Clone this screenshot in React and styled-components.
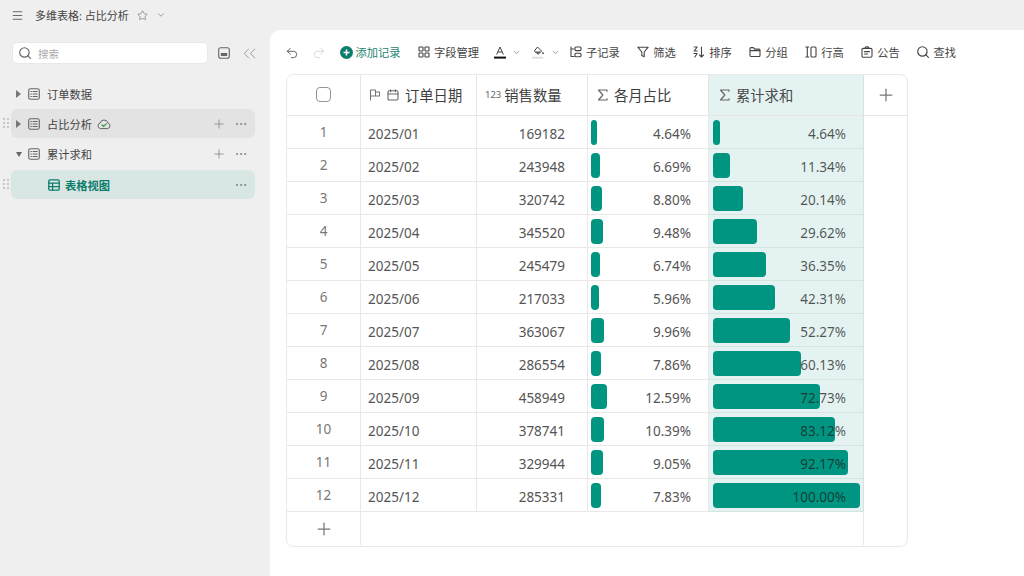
import React from "react";
import styled, { createGlobalStyle } from "styled-components";
import {
  ChevronDown,
  ChevronsLeft,
  Ellipsis,
  Menu,
  Plus,
  Redo2,
  Star,
  Undo2,
} from "lucide-react";

const TEAL = "#009580";

const GlobalStyle = createGlobalStyle`
  html, body {
    margin: 0;
    padding: 0;
    background: #efefef;
  }
  body {
    font-family: "Noto Sans", "Noto Sans CJK SC", sans-serif;
    color: #333;
  }
  * {
    box-sizing: border-box;
  }
  svg {
    flex: none;
  }
`;

const Page = styled.div`
  width: 1024px;
  height: 576px;
  display: flex;
  flex-direction: column;
  overflow: hidden;
  background: #efefef;
`;

const TopBar = styled.header`
  height: 30px;
  display: flex;
  align-items: center;
  padding-left: 11px;
  color: #666;
`;

const DocTitle = styled.span`
  margin-left: 11px;
  margin-right: 8px;
  font-size: 11px;
  color: #444;
`;

const Body = styled.div`
  flex: 1;
  display: flex;
  min-height: 0;
`;

const Sidebar = styled.aside`
  width: 270px;
  flex: none;
  padding: 12px 15px 0 11px;
`;

const SearchRow = styled.div`
  display: flex;
  align-items: center;
  height: 22px;
  margin-bottom: 15px;
  color: #666;
`;

const SearchBox = styled.div`
  width: 196px;
  height: 22px;
  flex: none;
  display: flex;
  align-items: center;
  gap: 7px;
  padding-left: 6px;
  margin-left: 1px;
  margin-right: 10px;
  background: #fff;
  border: 1px solid #e8e8e8;
  border-radius: 5px;
  font-size: 10.5px;
  color: #aaa;
`;

const Collapse = styled.span`
  display: flex;
  flex: none;
  margin-left: 9px;
  color: #777;
`;

const NavList = styled.nav`
  display: flex;
  flex-direction: column;
  gap: 1.4px;
`;

const NavItem = styled.div`
  position: relative;
  height: 29px;
  display: flex;
  align-items: center;
  padding: 0 7px 0 ${(p) => (p.$child ? "37px" : "4px")};
  border-radius: 6px;
  background: ${(p) => p.$bg || "transparent"};
  font-size: 11.25px;
  font-weight: ${(p) => (p.$child ? 700 : 400)};
  color: ${(p) => (p.$child ? "#0c7d6c" : "#444")};
`;

const Caret = styled.span`
  width: 0;
  height: 0;
  margin: 0 ${(p) => (p.$open ? "6px" : "7px")} 0 1px;
  border-style: solid;
  border-color: transparent;
  ${(p) =>
    p.$open
      ? "border-width: 5px 3px 0 3px; border-top-color: #666;"
      : "border-width: 4px 0 4px 5px; border-left-color: #777;"}
`;

const NavLabel = styled.span`
  margin-left: ${(p) => (p.$child ? "5px" : "7px")};
`;

const Grip = styled.span`
  position: absolute;
  left: -8px;
  top: 9px;
  display: flex;
`;

const NavActions = styled.span`
  margin-left: auto;
  display: flex;
  align-items: center;
  gap: 8px;
  color: #777;
`;

const Main = styled.main`
  flex: 1;
  min-width: 0;
  padding: 0 116px 0 16px;
  background: #fff;
  border-top-left-radius: 10px;
`;

const Toolbar = styled.div`
  height: 44px;
  display: flex;
  align-items: center;
  gap: 17.5px;
  color: #555;
`;

const HistoryGroup = styled.div`
  display: flex;
  gap: 13px;
  margin-right: -4px;
  margin-left: -1px;
  padding-top: 1px;
`;

const ToolButton = styled.button`
  display: flex;
  align-items: center;
  gap: ${(p) => (p.$tight ? "3px" : "4px")};
  padding: 0;
  border: 0;
  background: none;
  font: inherit;
  font-size: 11.25px;
  white-space: nowrap;
  color: ${(p) => (p.$accent ? "#1c8572" : "#444")};
`;

const ColorGroup = styled.div`
  display: flex;
  align-items: center;
  gap: 11px;
  margin-left: -3px;
  margin-right: -7px;
`;

const ColorButton = styled(ToolButton)`
  gap: 6px;
`;

const Table = styled.div`
  height: 472.5px;
  display: grid;
  grid-template-columns: 74px 116px 111px 121px 155px 1fr;
  grid-template-rows: 41px repeat(13, 1fr);
  border: 1px solid #e9e9e9;
  border-radius: 8px;
  overflow: hidden;
`;

const HeadCell = styled.div`
  display: flex;
  align-items: center;
  justify-content: ${(p) => (p.$center ? "center" : "flex-start")};
  gap: ${(p) => p.$gap || "5px"};
  padding-left: ${(p) => p.$pad || "0"};
  padding-bottom: 1px;
  border-bottom: 1px solid #e6e6e6;
  border-right: 1px solid ${(p) => (p.$hl ? "#d3e4e1" : "#e6e6e6")};
  background: ${(p) => (p.$hl ? "#e4f3f1" : "#fff")};
  font-size: 14.3px;
  color: ${(p) => (p.$hl ? "#4a4a4a" : "#3d3d3d")};
`;

const AddColumn = styled.div`
  display: flex;
  align-items: center;
  justify-content: center;
  border-bottom: 1px solid #e6e6e6;
  color: #777;
`;

const NumberTag = styled.span`
  font-size: 9.5px;
  color: #666;
`;

const Row = styled.div`
  display: contents;
`;

const Cell = styled.div`
  position: relative;
  min-width: 0;
  display: flex;
  align-items: center;
  justify-content: ${(p) => (p.$right ? "flex-end" : "flex-start")};
  padding: 3px ${(p) => p.$padRight || "0"} 0 ${(p) => p.$padLeft || "0"};
  border-bottom: 1px solid ${(p) => (p.$hl ? "#d3e4e1" : "#e8e8e8")};
  border-right: 1px solid ${(p) => (p.$hl ? "#d3e4e1" : "#e8e8e8")};
  background: ${(p) => (p.$hl ? "#e4f3f1" : "#fff")};
  font-size: 13.5px;
  color: #555;
`;

const RowNumber = styled(Cell)`
  justify-content: center;
  padding-bottom: 4px;
  color: #777;
`;

const Bar = styled.div`
  position: absolute;
  left: ${(p) => p.$left};
  top: 4px;
  bottom: 3px;
  border-radius: 4px;
  background: ${TEAL};
`;

const CellValue = styled.span`
  position: relative;
  color: ${(p) => (p.$over ? "rgba(30, 30, 30, 0.75)" : "#555")};
`;

const AddRow = styled.div`
  display: flex;
  align-items: center;
  justify-content: center;
  border-right: 1px solid #e8e8e8;
  color: #777;
`;

const RowFiller = styled.div`
  grid-column: 2 / 6;
  border-right: 1px solid #e8e8e8;
`;

const ColumnFiller = styled.div`
  grid-column: 6;
  grid-row: 2 / -1;
`;

const CheckBox = styled.span`
  width: 15px;
  height: 15px;
  border: 1.4px solid #8f959b;
  border-radius: 4px;
`;

const Svg = ({ size = 12, children, color = "currentColor", width = 1.1 }) => (
  <svg
    width={size}
    height={size}
    viewBox="0 0 12 12"
    fill="none"
    stroke={color}
    strokeWidth={width}
    strokeLinecap="round"
    strokeLinejoin="round"
  >
    {children}
  </svg>
);

const SearchIcon = ({ color }) => (
  <Svg color={color} width={1.15}>
    <circle cx="5.4" cy="5.4" r="4.7" />
    <path d="M8.9 8.9l2.5 2.5" />
  </Svg>
);

const SheetIcon = () => (
  <Svg size={12} color="#666">
    <rect x="0.7" y="0.7" width="10.6" height="10.6" rx="1.8" />
    <path d="M2.8 3.5h.6M5 3.5h4.2M2.8 6h.6M5 6h4.2M2.8 8.5h.6M5 8.5h4.2" />
  </Svg>
);

const TableViewIcon = () => (
  <Svg size={12} color="#0c7d6c" width={1.3}>
    <rect x="0.8" y="0.8" width="10.4" height="10.4" rx="1.2" />
    <path d="M0.8 4.2h10.4M0.8 7.7h10.4M4.6 4.2v7" />
  </Svg>
);

const CloudCheckIcon = () => (
  <svg width="14" height="12" viewBox="0 0 14 12" fill="none" style={{ marginLeft: 5 }}>
    <path
      d="M3.6 10.6a2.8 2.8 0 0 1-.5-5.5 4 4 0 0 1 7.8 0 2.8 2.8 0 0 1-.5 5.5z"
      stroke="#666"
      strokeWidth="1"
    />
    <path d="M5 7l1.6 1.5L9.2 5.8" stroke="#2f9e44" strokeWidth="1.2" strokeLinecap="round" />
  </svg>
);

const GripIcon = () => (
  <svg width="6" height="10" viewBox="0 0 6 10" fill="#999">
    {[1, 5, 9].map((y) => (
      <React.Fragment key={y}>
        <circle cx="1" cy={y} r="0.8" />
        <circle cx="5" cy={y} r="0.8" />
      </React.Fragment>
    ))}
  </svg>
);

const PanelIcon = () => (
  <Svg size={12} color="#666">
    <rect x="0.7" y="0.7" width="10.6" height="10.6" rx="2" />
    <rect x="2.8" y="6" width="6.4" height="3" fill="#666" stroke="none" />
  </Svg>
);

const AddCircleIcon = () => (
  <svg width="13" height="13" viewBox="0 0 13 13">
    <circle cx="6.5" cy="6.5" r="6.5" fill="#0c7d6c" />
    <path d="M6.5 3.5v6M3.5 6.5h6" stroke="#fff" strokeWidth="1.5" />
  </svg>
);

const FieldsIcon = () => (
  <Svg>
    <rect x="1" y="1" width="4" height="4" rx="0.6" />
    <rect x="7" y="1" width="4" height="4" rx="0.6" />
    <rect x="1" y="7" width="4" height="4" rx="0.6" />
    <rect x="7" y="7" width="4" height="4" rx="0.6" />
  </Svg>
);

const TextColorIcon = () => (
  <svg width="12" height="13" viewBox="0 0 12 13" fill="none">
    <path d="M2.6 8.6L6 1l3.4 7.6M3.8 6h4.4" stroke="#444" strokeWidth="1" />
    <rect y="10.6" width="12" height="2" fill="#111" />
  </svg>
);

const FillColorIcon = () => (
  <svg width="13" height="13" viewBox="0 0 13 13" fill="none">
    <path d="M5.5 1l4.2 4.2-3.6 3L2.3 5z" stroke="#444" strokeWidth="1" />
    <path d="M3 5.4h5.8L6.1 7.7z" fill="#555" />
    <circle cx="11" cy="7.2" r="0.9" fill="#444" />
    <rect y="10.8" width="11" height="1.8" fill="#ddd" />
  </svg>
);

const SubRecordIcon = () => (
  <Svg>
    <path d="M1 1v9.5h3M1 3h3" />
    <rect x="5" y="1" width="6" height="3.6" rx="1" />
    <rect x="5" y="7.2" width="6" height="3.6" rx="1" />
  </Svg>
);

const FunnelIcon = () => (
  <Svg>
    <path d="M0.8 1.2h10.4L7.2 6v4.8L4.8 9.6V6z" />
  </Svg>
);

const SortIcon = () => (
  <Svg>
    <path d="M1.2 1h3L1.2 5h3M1 7.5h3.2L1.8 11M8.5 1v10M6.5 9l2 2 2-2" />
  </Svg>
);

const FolderIcon = () => (
  <Svg>
    <path d="M1 2.6a1 1 0 0 1 1-1h2.4l1.2 1.5H10a1 1 0 0 1 1 1v5.4a1 1 0 0 1-1 1H2a1 1 0 0 1-1-1zM1 4.6h10" />
  </Svg>
);

const RowHeightIcon = () => (
  <Svg>
    <path d="M0.8 1h3M0.8 11h3M2.3 1v10" />
    <rect x="6" y="1" width="5" height="10" rx="1" />
  </Svg>
);

const NoticeIcon = () => (
  <Svg>
    <rect x="1" y="2.4" width="10" height="8.8" rx="1.2" />
    <path d="M4 2.4L5 0.9h2l1 1.5M3.5 5.6h5M3.5 8h3" />
  </Svg>
);

const FlagIcon = () => (
  <Svg color="#777">
    <path d="M1.5 11V1h5v6h-5M6.5 3h4v4h-4" />
  </Svg>
);

const CalendarIcon = () => (
  <Svg color="#666">
    <rect x="1" y="1.8" width="10" height="9.2" rx="1.2" />
    <path d="M1 5h10M3.6 0.8v2M8.4 0.8v2" />
  </Svg>
);

const SigmaIcon = () => (
  <Svg color="#666" width={1.2}>
    <path d="M10 2.2V1H1.5l4.3 5-4.3 5H10V9.8" />
  </Svg>
);

const months = [
  ["169182", 4.64, 4.64],
  ["243948", 6.69, 11.34],
  ["320742", 8.8, 20.14],
  ["345520", 9.48, 29.62],
  ["245479", 6.74, 36.35],
  ["217033", 5.96, 42.31],
  ["363067", 9.96, 52.27],
  ["286554", 7.86, 60.13],
  ["458949", 12.59, 72.73],
  ["378741", 10.39, 83.12],
  ["329944", 9.05, 92.17],
  ["285331", 7.83, 100],
];

const tools = [
  [SubRecordIcon, "子记录"],
  [FunnelIcon, "筛选"],
  [SortIcon, "排序"],
  [FolderIcon, "分组"],
  [RowHeightIcon, "行高"],
  [NoticeIcon, "公告"],
  [SearchIcon, "查找"],
];

export default function App() {
  return (
    <Page>
      <GlobalStyle />
      <TopBar>
        <Menu size={13} strokeWidth={1.8} />
        <DocTitle>多维表格: 占比分析</DocTitle>
        <Star size={11} strokeWidth={1.3} />
        <ChevronDown size={10} strokeWidth={1.5} style={{ marginLeft: 8 }} />
      </TopBar>
      <Body>
        <Sidebar>
          <SearchRow>
            <SearchBox>
              <SearchIcon color="#666" />
              搜索
            </SearchBox>
            <PanelIcon />
            <Collapse>
              <ChevronsLeft size={21} strokeWidth={0.8} />
            </Collapse>
          </SearchRow>
          <NavList>
            <NavItem>
              <Caret />
              <SheetIcon />
              <NavLabel>订单数据</NavLabel>
            </NavItem>
            <NavItem $bg="#e3e3e3">
              <Grip>
                <GripIcon />
              </Grip>
              <Caret />
              <SheetIcon />
              <NavLabel>占比分析</NavLabel>
              <CloudCheckIcon />
              <NavActions>
                <Plus size={14} strokeWidth={1.2} />
                <Ellipsis size={14} strokeWidth={1.4} />
              </NavActions>
            </NavItem>
            <NavItem>
              <Caret $open />
              <SheetIcon />
              <NavLabel>累计求和</NavLabel>
              <NavActions>
                <Plus size={14} strokeWidth={1.2} />
                <Ellipsis size={14} strokeWidth={1.4} />
              </NavActions>
            </NavItem>
            <NavItem $child $bg="#d8e6e4">
              <Grip>
                <GripIcon />
              </Grip>
              <TableViewIcon />
              <NavLabel $child>表格视图</NavLabel>
              <NavActions>
                <Ellipsis size={14} strokeWidth={1.4} />
              </NavActions>
            </NavItem>
          </NavList>
        </Sidebar>
        <Main>
          <Toolbar>
            <HistoryGroup>
              <Undo2 size={14} strokeWidth={1.4} color="#444" />
              <Redo2 size={14} strokeWidth={1.3} color="#ccc" />
            </HistoryGroup>
            <ToolButton $accent $tight>
              <AddCircleIcon />
              添加记录
            </ToolButton>
            <ToolButton>
              <FieldsIcon />
              字段管理
            </ToolButton>
            <ColorGroup>
              <ColorButton>
                <TextColorIcon />
                <ChevronDown size={9} strokeWidth={1.3} />
              </ColorButton>
              <ColorButton>
                <FillColorIcon />
                <ChevronDown size={9} strokeWidth={1.3} />
              </ColorButton>
            </ColorGroup>
            {tools.map(([Icon, label]) => (
              <ToolButton key={label}>
                <Icon />
                {label}
              </ToolButton>
            ))}
          </Toolbar>
          <Table>
            <HeadCell $center>
              <CheckBox />
            </HeadCell>
            <HeadCell $pad="8px" $gap="6px">
              <FlagIcon />
              <CalendarIcon />
              订单日期
            </HeadCell>
            <HeadCell $pad="8px" $gap="3px">
              <NumberTag>123</NumberTag>
              销售数量
            </HeadCell>
            <HeadCell $pad="9px">
              <SigmaIcon />
              各月占比
            </HeadCell>
            <HeadCell $pad="10px" $hl>
              <SigmaIcon />
              累计求和
            </HeadCell>
            <AddColumn>
              <Plus size={20} strokeWidth={1.5} />
            </AddColumn>
            {months.map(([sales, share, total], i) => (
              <Row key={sales}>
                <RowNumber>{i + 1}</RowNumber>
                <Cell $padLeft="7px">2025/{String(i + 1).padStart(2, "0")}</Cell>
                <Cell $right $padRight="22px">
                  {sales}
                </Cell>
                <Cell $right $padRight="17px">
                  <Bar $left="3px" style={{ width: share * 1.17 + 1 }} />
                  <CellValue>{share.toFixed(2)}%</CellValue>
                </Cell>
                <Cell $right $hl $padRight="17px">
                  <Bar $left="4px" style={{ width: total * 1.47 }} />
                  <CellValue $over>{total.toFixed(2)}%</CellValue>
                </Cell>
              </Row>
            ))}
            <AddRow>
              <Plus size={20} strokeWidth={1.5} />
            </AddRow>
            <RowFiller />
            <ColumnFiller />
          </Table>
        </Main>
      </Body>
    </Page>
  );
}
